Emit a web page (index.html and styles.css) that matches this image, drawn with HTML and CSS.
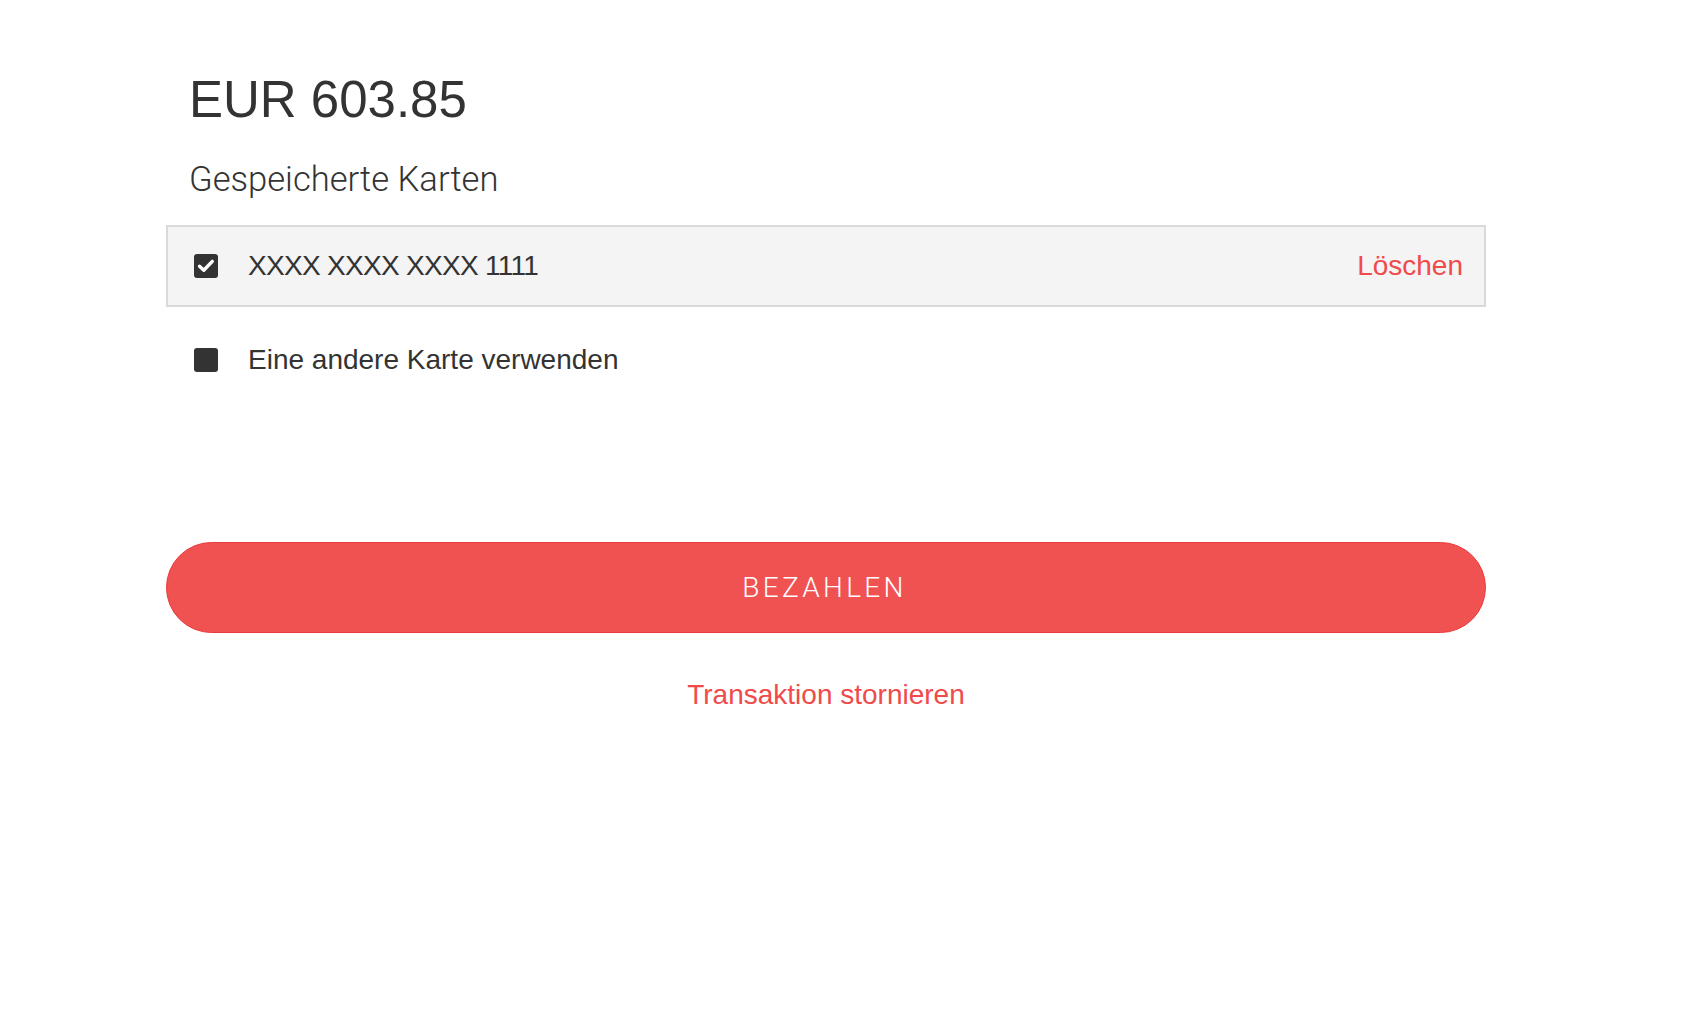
FILE: index.html
```html
<!DOCTYPE html>
<html lang="de">
<head>
    <meta charset="UTF-8">
    <meta name="viewport" content="width=device-width, initial-scale=1.0">
    <title>Zahlung</title>
    <link rel="stylesheet" href="styles.css">
</head>
<body>
    <div class="payment">
        <h1 class="amount">EUR 603.85</h1>
        <h2 class="section-title">Gespeicherte Karten</h2>

        <div class="card-row saved">
            <span class="check checked">
                <svg width="24" height="24" viewBox="0 0 24 24">
                    <rect width="24" height="24" rx="3" fill="#333"/>
                    <path d="M5.5 12.2 L9.8 16.2 L18.3 7.4" fill="none" stroke="#fff" stroke-width="3.4" stroke-linecap="round" stroke-linejoin="round"/>
                </svg>
            </span>
            <span class="card-number">XXXX XXXX XXXX 1111</span>
            <a class="delete" href="#">Löschen</a>
        </div>

        <div class="card-row other">
            <span class="check">
                <svg width="24" height="24" viewBox="0 0 24 24">
                    <rect width="24" height="24" rx="3" fill="#333"/>
                </svg>
            </span>
            <span class="card-label">Eine andere Karte verwenden</span>
        </div>

        <button class="pay" type="button">BEZAHLEN</button>

        <div class="cancel">
            <a href="#">Transaktion stornieren</a>
        </div>
    </div>
</body>
</html>
```

FILE: styles.css
```css
body {
    margin: 0;
    font-family: "Liberation Sans", Arial, sans-serif;
    color: #333;
    background: #fff;
}
.payment {
    width: 1320px;
    margin-left: 166px;
    padding-top: 75px;
}
.amount {
    margin: 0 0 38px 23px;
    font-size: 51px;
    line-height: 50px;
    font-weight: normal;
    color: #333;
}
.section-title {
    margin: 0 0 29px 23px;
    font-family: Roboto, "Liberation Sans", sans-serif;
    font-size: 34.6px;
    line-height: 33px;
    font-weight: 300;
    color: #333;
}
.card-row {
    display: flex;
    align-items: center;
    font-size: 28px;
    line-height: 28px;
}
.card-row.saved {
    background-color: #f4f4f4;
    border: 2px solid #d9d9d9;
    padding: 25px 21px 25px 26px;
}
.card-row.other {
    margin-top: 39px;
    padding-left: 28px;
}
.check {
    display: flex;
    width: 24px;
    height: 24px;
    margin-right: 30px;
}
.card-number {
    letter-spacing: -0.7px;
    color: #333;
}
.card-label {
    color: #333;
}
.delete {
    margin-left: auto;
    color: #f04a4a;
    text-decoration: none;
}
.pay {
    display: block;
    width: 100%;
    height: 91px;
    margin-top: 168px;
    padding-left: 3px;
    background-color: #f05252;
    border: 1px solid #eb3a3c;
    border-radius: 46px;
    color: white;
    font-family: Roboto, "Liberation Sans", sans-serif;
    font-size: 28px;
    font-weight: 300;
    letter-spacing: 3.3px;
    cursor: pointer;
}
.cancel {
    margin-top: 48px;
    text-align: center;
    font-size: 28px;
    line-height: 28px;
}
.cancel a {
    color: #f04a4a;
    text-decoration: none;
}
```
